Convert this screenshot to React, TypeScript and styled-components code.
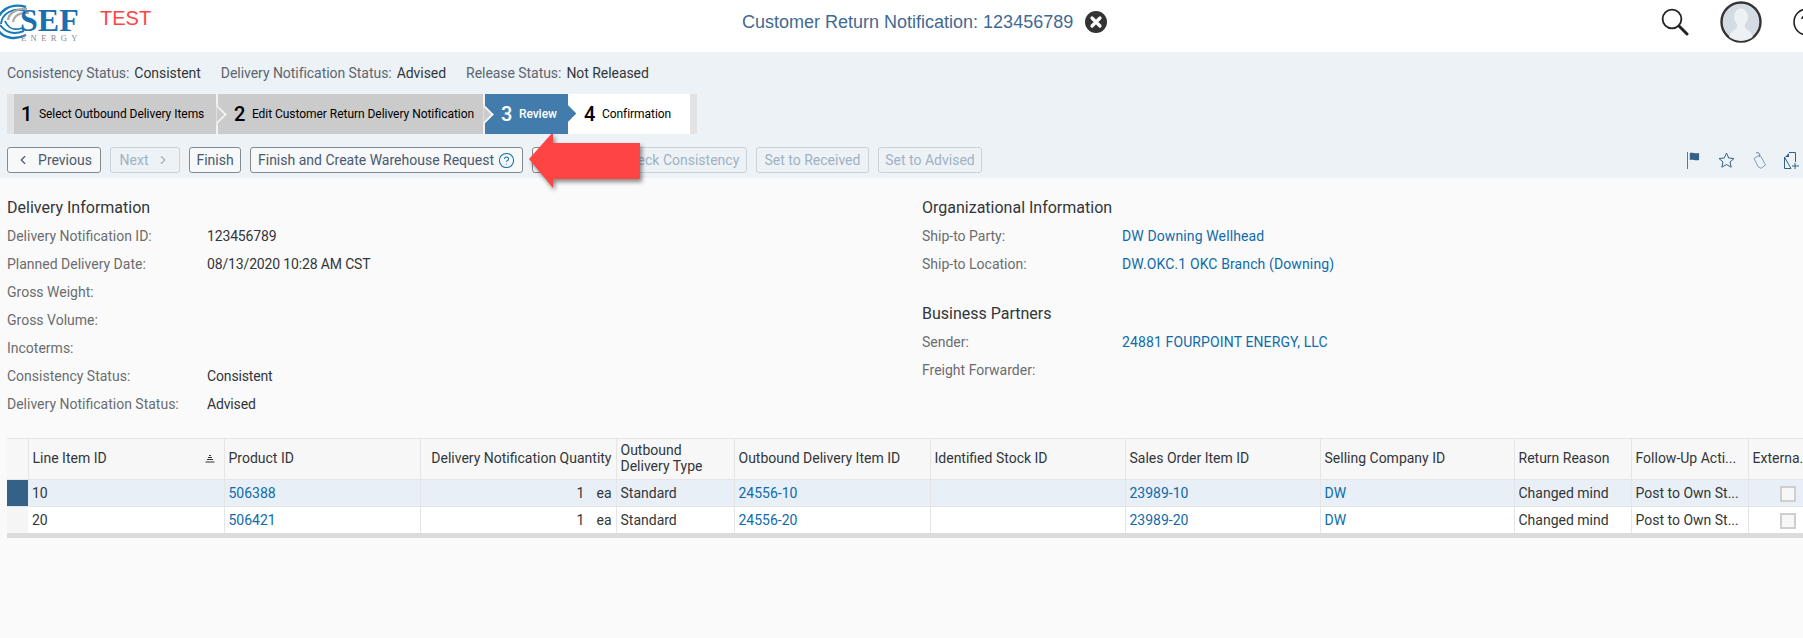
import React from "react";
import styled, { createGlobalStyle } from "styled-components";
import { ChevronLeft, ChevronRight, CircleHelp } from "lucide-react";

const Global = createGlobalStyle`
  html, body { margin: 0; padding: 0; height: 100%; background: #fafafa; overflow: hidden; }
  body { font-family: Roboto, "Liberation Sans", sans-serif; font-size: 14px; color: #32363a; }
  * { box-sizing: border-box; }
`;

const Page = styled.div`
  position: relative;
  width: 1803px;
  height: 638px;
  overflow: hidden;
  background: #fafafa;
`;

const Header = styled.header`
  display: flex;
  align-items: center;
  height: 52px;
  padding-bottom: 8px;
  background: #fff;
`;
const Brand = styled.div`
  flex: 0 0 742px;
  display: flex;
  align-items: flex-start;
  height: 100%;
`;
const Test = styled.span`
  margin: 6px 0 0 8px;
  font-family: "Liberation Sans", Arial, sans-serif;
  font-size: 20px;
  line-height: 24px;
  color: #ff4444;
`;
const Title = styled.h1`
  display: flex;
  align-items: center;
  gap: 12px;
  margin: 0;
  font-family: "Liberation Sans", Arial, sans-serif;
  font-weight: 400;
  font-size: 18px;
  color: #3f6a94;
`;
const HeaderActions = styled.div`
  display: flex;
  align-items: center;
  gap: 31px;
  margin-left: auto;
  margin-right: -18px;
`;

const SubHeader = styled.section`
  height: 126px;
  padding: 0 0 0 7px;
  background: #edf2f7;
  display: flex;
  flex-direction: column;
`;
const StatusBar = styled.div`
  display: flex;
  gap: 20px;
  height: 42px;
  align-items: center;
`;
const StatusItem = styled.div`
  display: flex;
  gap: 5px;
`;
const StatusLabel = styled.span`
  color: #5c6670;
  letter-spacing: -0.05px;
`;
const StatusValue = styled.span`
  color: #32363a;
  letter-spacing: -0.05px;
`;

const Wizard = styled.ol`
  display: flex;
  align-self: flex-start;
  height: 40px;
  margin: 0;
  padding: 0 7px;
  list-style: none;
  background: #e3e3e3;
`;
const Step = styled.li<{ $width: number; $pad: number; $z: number; $tone: "done" | "active" | "todo" }>`
  position: relative;
  z-index: ${(p) => p.$z};
  display: flex;
  align-items: center;
  gap: 6.5px;
  width: ${(p) => p.$width}px;
  padding-left: ${(p) => p.$pad}px;
  background: ${(p) => (p.$tone === "done" ? "#cbcbcb" : p.$tone === "active" ? "#427cac" : "#fff")};
  color: ${(p) => (p.$tone === "active" ? "#fff" : "#000")};
  border-right: ${(p) => (p.$tone === "done" ? "2px solid #f2f2f2" : "none")};
  ${(p) =>
    p.$tone === "todo"
      ? ""
      : `&::after {
    content: "";
    position: absolute;
    right: ${p.$tone === "done" ? -8 : -6}px;
    top: 13px;
    width: 13px;
    height: 13px;
    background: inherit;
    transform: rotate(45deg);
    clip-path: polygon(0 0, 100% 0, 100% 100%);
    ${p.$tone === "done" ? "border-top: 2px solid #f2f2f2; border-right: 2px solid #f2f2f2;" : ""}
  }`}
`;
const StepNumber = styled.span`
  font-size: 20px;
  font-weight: 500;
`;
const StepLabel = styled.span<{ $strong?: boolean }>`
  font-size: 12px;
  letter-spacing: -0.04px;
  font-weight: ${(p) => (p.$strong ? 500 : 400)};
  white-space: nowrap;
`;

const Toolbar = styled.div`
  display: flex;
  align-items: center;
  gap: 9px;
  margin-top: 13px;
  height: 26px;
`;
const ToolButton = styled.button<{ $width?: number; $gap?: number }>`
  display: inline-flex;
  align-items: center;
  justify-content: center;
  gap: ${(p) => p.$gap ?? 4}px;
  height: 26px;
  ${(p) => (p.$width ? `width: ${p.$width}px;` : "")}
  padding: 0 4px;
  font: inherit;
  color: #4a5a6c;
  background: #f6f8fa;
  border: 1px solid #86898c;
  border-radius: 3px;
  white-space: nowrap;
  &:disabled {
    color: #9fb1c2;
    background: transparent;
    border-color: #c9d3dc;
  }
`;
const ToolIcons = styled.div`
  display: flex;
  align-items: center;
  gap: 18px;
  margin-left: auto;
  padding-right: 4px;
`;

const Form = styled.section`
  display: flex;
  padding: 14px 0 0 7px;
  height: 260px;
`;
const FormColumn = styled.div<{ $width: number }>`
  flex: 0 0 ${(p) => p.$width}px;
  display: flex;
  flex-direction: column;
`;
const FormGroup = styled.div`
  & + & {
    margin-top: 20px;
  }
`;
const FormTitle = styled.h2`
  margin: 0;
  height: 30px;
  line-height: 32px;
  font-size: 16px;
  font-weight: 400;
  color: #32363a;
`;
const FormRow = styled.div`
  display: grid;
  grid-template-columns: 200px 1fr;
  height: 28px;
  align-items: center;
`;
const FieldLabel = styled.span`
  color: #6a6d70;
`;
const FieldValue = styled.span`
  color: #32363a;
  letter-spacing: -0.15px;
`;
const Link = styled.a`
  color: #0f6bab;
  text-decoration: none;
`;
const FieldLink = styled(Link)`
  letter-spacing: 0.12px;
`;

const TableWrap = styled.div`
  margin: 0 0 0 7px;
  overflow: hidden;
`;
const Table = styled.table`
  width: 1821px;
  table-layout: fixed;
  border-collapse: collapse;
  border-top: 1px solid #e5e5e5;
`;
const HeadCell = styled.th<{ $right?: boolean }>`
  position: relative;
  height: 41px;
  padding: 0 4px 2px;
  font-weight: 400;
  line-height: 16px;
  text-align: ${(p) => (p.$right ? "right" : "left")};
  color: #32363a;
  background: #f7f7f7;
  border-right: 1px solid #e5e5e5;
  border-bottom: 1px solid #e5e5e5;
  white-space: pre-line;
`;
const SortMark = styled.svg`
  position: absolute;
  right: 9px;
  top: 15px;
`;
const Row = styled.tr<{ $selected?: boolean }>`
  background: ${(p) => (p.$selected ? "#e8eff6" : "#fff")};
`;
const Cell = styled.td<{ $right?: boolean; $center?: boolean }>`
  height: 27px;
  padding: 0 4px;
  white-space: nowrap;
  text-align: ${(p) => (p.$right ? "right" : p.$center ? "center" : "left")};
  border-right: 1px solid #e5e5e5;
  border-bottom: 1px solid #e5e5e5;
`;
const SelectCell = styled.td<{ $selected?: boolean }>`
  padding: 0;
  background: ${(p) => (p.$selected ? "#346187" : "#f5f5f5")};
  border-bottom: 1px solid #e5e5e5;
`;
const Unit = styled.span`
  margin-left: 12px;
`;
const Check = styled.span`
  display: inline-block;
  vertical-align: middle;
  width: 16px;
  height: 16px;
  background: #f7f7f7;
  border: 2px solid #cfcfcf;
`;
const TableFoot = styled.div`
  width: 100%;
  height: 5px;
  margin-top: -1px;
  background: #dcdcdc;
`;
const CallOut = styled.svg`
  position: absolute;
  left: 525px;
  top: 128px;
  filter: drop-shadow(2px 3px 2px rgba(0, 0, 0, 0.45));
`;

const Logo = () => (
  <svg width="92" height="44" viewBox="0 0 92 44" aria-label="SEF Energy">
    <g fill="none" stroke="#1b7ab8">
      <path d="M26 7 C10 2 -3 12 -3 24" strokeWidth="2.4" />
      <path d="M25 11 C12 7 2 14 1 24" strokeWidth="2" />
      <path d="M-2 30 C4 39 16 40 26 35" strokeWidth="2.4" />
      <path d="M0 25 C6 33 14 35 24 31" strokeWidth="2" />
      <path d="M5 21 C8 28 14 31 22 28" strokeWidth="1.8" />
    </g>
    <g fill="none" stroke="#a9a9a9">
      <path d="M27 9 C17 8 9 13 8 20" strokeWidth="2.4" />
      <path d="M29 13 C21 12 14 15 13 22" strokeWidth="2.2" />
    </g>
    <text x="20" y="31" fontFamily="'Liberation Serif', serif" fontWeight="700" fontSize="32" fill="#1a6fb0">
      SEF
    </text>
    <text x="21" y="41" fontFamily="'Liberation Serif', serif" fontSize="8.5" letterSpacing="4.4" fill="#8a8a8a">
      ENERGY
    </text>
  </svg>
);

const CloseIcon = () => (
  <svg width="22" height="22" viewBox="0 0 22 22" aria-hidden="true">
    <circle cx="11" cy="11" r="11" fill="#333" />
    <path d="M7 7 L15 15 M15 7 L7 15" stroke="#fff" strokeWidth="3.2" strokeLinecap="round" />
  </svg>
);
const SearchIcon = () => (
  <svg width="28" height="28" viewBox="0 0 28 28" aria-hidden="true">
    <circle cx="11" cy="11" r="9.4" fill="none" stroke="#222" strokeWidth="1.8" />
    <path d="M18 18 L26 26" stroke="#222" strokeWidth="3" strokeLinecap="round" />
  </svg>
);
const Avatar = () => (
  <svg width="42" height="42" viewBox="0 0 42 42" aria-hidden="true">
    <defs>
      <clipPath id="avatarClip">
        <circle cx="21" cy="21" r="19" />
      </clipPath>
    </defs>
    <circle cx="21" cy="21" r="19.5" fill="#d4dbe2" stroke="#333" strokeWidth="2.4" />
    <g clipPath="url(#avatarClip)" fill="#eef1f4">
      <ellipse cx="21" cy="16" rx="7" ry="8.5" />
      <path d="M17 22 H25 V27 C29 30 33 31 34 42 H8 C9 31 13 30 17 27 Z" />
    </g>
  </svg>
);
const HelpIcon = () => (
  <svg width="28" height="28" viewBox="0 0 28 28" aria-hidden="true">
    <circle cx="14" cy="14" r="13" fill="none" stroke="#222" strokeWidth="1.6" />
    <path d="M9 11 C9 7 19 6 19 11 C19 15 14 14 14 19" fill="none" stroke="#222" strokeWidth="1.6" />
  </svg>
);
const FlagIcon = () => (
  <svg width="13" height="17" viewBox="0 0 14 17" preserveAspectRatio="none" aria-hidden="true">
    <path d="M0.5 0 V17" stroke="#6b5b95" strokeWidth="1" />
    <path d="M3 1 C6 0 8 2 13 1 V8 C9 9 6 7 3 8 Z" fill="#346187" />
  </svg>
);
const StarIcon = () => (
  <svg width="17" height="16" viewBox="0 0 17 16" aria-hidden="true">
    <path d="M8.5 1 L10.7 6 L16 6.5 L12 10 L13.2 15.2 L8.5 12.5 L3.8 15.2 L5 10 L1 6.5 L6.3 6 Z" fill="none" stroke="#346187" strokeWidth="1" />
  </svg>
);
const TagIcon = () => (
  <svg width="13" height="17" viewBox="0 0 13 17" aria-hidden="true">
    <path d="M1 6.5 L5.5 3.5 L8 4.5 L12.5 13 L8 16.3 L5.5 15.2 Z" fill="none" stroke="#7f9cbd" strokeWidth="1" />
    <path d="M3 1 C6 0 8 2 6 5" fill="none" stroke="#5e7fa6" strokeWidth="1" />
  </svg>
);
const NewDocIcon = () => (
  <svg width="15" height="17" viewBox="0 0 15 17" aria-hidden="true">
    <path d="M5 0.5 H11.5 V10 M7 16.5 H0.5 V5 Z" fill="none" stroke="#346187" strokeWidth="1" />
    <path d="M1 5 L5 1 V5 Z" fill="#346187" />
    <path d="M11 11 V17 M8 14 H15" stroke="#346187" strokeWidth="1" />
  </svg>
);

const rows = [
  { id: "10", product: "506388", item: "24556-10", order: "23989-10", selected: true },
  { id: "20", product: "506421", item: "24556-20", order: "23989-20", selected: false },
];
const colWidths = [21, 196, 196, 196, 118, 196, 195, 195, 194, 117, 117, 80];

export default function App() {
  return (
    <Page>
      <Global />
      <Header>
        <Brand>
          <Logo />
          <Test>TEST</Test>
        </Brand>
        <Title>
          Customer Return Notification: 123456789
          <CloseIcon />
        </Title>
        <HeaderActions>
          <SearchIcon />
          <Avatar />
          <HelpIcon />
        </HeaderActions>
      </Header>

      <SubHeader>
        <StatusBar>
          <StatusItem>
            <StatusLabel>Consistency Status:</StatusLabel>
            <StatusValue>Consistent</StatusValue>
          </StatusItem>
          <StatusItem>
            <StatusLabel>Delivery Notification Status:</StatusLabel>
            <StatusValue>Advised</StatusValue>
          </StatusItem>
          <StatusItem>
            <StatusLabel>Release Status:</StatusLabel>
            <StatusValue>Not Released</StatusValue>
          </StatusItem>
        </StatusBar>
        <Wizard>
          <Step $tone="done" $width={204} $pad={7} $z={4}>
            <StepNumber>1</StepNumber>
            <StepLabel>Select Outbound Delivery Items</StepLabel>
          </Step>
          <Step $tone="done" $width={267} $pad={16} $z={3}>
            <StepNumber>2</StepNumber>
            <StepLabel>Edit Customer Return Delivery Notification</StepLabel>
          </Step>
          <Step $tone="active" $width={83} $pad={16} $z={2}>
            <StepNumber>3</StepNumber>
            <StepLabel $strong>Review</StepLabel>
          </Step>
          <Step $tone="todo" $width={122} $pad={16} $z={1}>
            <StepNumber>4</StepNumber>
            <StepLabel>Confirmation</StepLabel>
          </Step>
        </Wizard>
        <Toolbar>
          <ToolButton $width={94} $gap={8}>
            <ChevronLeft size={14} />
            Previous
          </ToolButton>
          <ToolButton $width={70} $gap={8} disabled>
            Next
            <ChevronRight size={14} />
          </ToolButton>
          <ToolButton $width={52}>Finish</ToolButton>
          <ToolButton $width={273}>
            Finish and Create Warehouse Request
            <CircleHelp size={17} color="#0f6bab" strokeWidth={1.5} />
          </ToolButton>
          <ToolButton $width={72} aria-hidden="true" />
          <ToolButton $width={134} disabled>
            Check Consistency
          </ToolButton>
          <ToolButton $width={113} disabled>
            Set to Received
          </ToolButton>
          <ToolButton $width={104} disabled>
            Set to Advised
          </ToolButton>
          <ToolIcons>
            <FlagIcon />
            <StarIcon />
            <TagIcon />
            <NewDocIcon />
          </ToolIcons>
        </Toolbar>
      </SubHeader>

      <Form>
        <FormColumn $width={915}>
          <FormGroup>
            <FormTitle>Delivery Information</FormTitle>
            <FormRow>
              <FieldLabel>Delivery Notification ID:</FieldLabel>
              <FieldValue>123456789</FieldValue>
            </FormRow>
            <FormRow>
              <FieldLabel>Planned Delivery Date:</FieldLabel>
              <FieldValue>08/13/2020 10:28 AM CST</FieldValue>
            </FormRow>
            <FormRow>
              <FieldLabel>Gross Weight:</FieldLabel>
            </FormRow>
            <FormRow>
              <FieldLabel>Gross Volume:</FieldLabel>
            </FormRow>
            <FormRow>
              <FieldLabel>Incoterms:</FieldLabel>
            </FormRow>
            <FormRow>
              <FieldLabel>Consistency Status:</FieldLabel>
              <FieldValue>Consistent</FieldValue>
            </FormRow>
            <FormRow>
              <FieldLabel>Delivery Notification Status:</FieldLabel>
              <FieldValue>Advised</FieldValue>
            </FormRow>
          </FormGroup>
        </FormColumn>
        <FormColumn $width={600}>
          <FormGroup>
            <FormTitle>Organizational Information</FormTitle>
            <FormRow>
              <FieldLabel>Ship-to Party:</FieldLabel>
              <FieldLink>DW Downing Wellhead</FieldLink>
            </FormRow>
            <FormRow>
              <FieldLabel>Ship-to Location:</FieldLabel>
              <FieldLink>DW.OKC.1 OKC Branch (Downing)</FieldLink>
            </FormRow>
          </FormGroup>
          <FormGroup>
            <FormTitle>Business Partners</FormTitle>
            <FormRow>
              <FieldLabel>Sender:</FieldLabel>
              <FieldLink>24881 FOURPOINT ENERGY, LLC</FieldLink>
            </FormRow>
            <FormRow>
              <FieldLabel>Freight Forwarder:</FieldLabel>
            </FormRow>
          </FormGroup>
        </FormColumn>
      </Form>

      <TableWrap>
        <Table>
          <colgroup>
            {colWidths.map((w, i) => (
              <col key={i} width={w} />
            ))}
          </colgroup>
          <thead>
            <tr>
              <HeadCell />
              <HeadCell>
                Line Item ID
                <SortMark width="10" height="9" viewBox="0 0 10 9" aria-hidden="true">
                  <path d="M4 1.5 H6 M3 3.5 H7 M2 5.5 H8 M0.5 8 H9.5" stroke="#333" strokeWidth="1" />
                </SortMark>
              </HeadCell>
              <HeadCell>Product ID</HeadCell>
              <HeadCell $right>Delivery Notification Quantity</HeadCell>
              <HeadCell>{"Outbound\nDelivery Type"}</HeadCell>
              <HeadCell>Outbound Delivery Item ID</HeadCell>
              <HeadCell>Identified Stock ID</HeadCell>
              <HeadCell>Sales Order Item ID</HeadCell>
              <HeadCell>Selling Company ID</HeadCell>
              <HeadCell>Return Reason</HeadCell>
              <HeadCell>Follow-Up Acti...</HeadCell>
              <HeadCell>Externa...</HeadCell>
            </tr>
          </thead>
          <tbody>
            {rows.map((r) => (
              <Row key={r.id} $selected={r.selected}>
                <SelectCell $selected={r.selected} />
                <Cell>{r.id}</Cell>
                <Cell>
                  <Link>{r.product}</Link>
                </Cell>
                <Cell $right>
                  1<Unit>ea</Unit>
                </Cell>
                <Cell>Standard</Cell>
                <Cell>
                  <Link>{r.item}</Link>
                </Cell>
                <Cell />
                <Cell>
                  <Link>{r.order}</Link>
                </Cell>
                <Cell>
                  <Link>DW</Link>
                </Cell>
                <Cell>Changed mind</Cell>
                <Cell>Post to Own St...</Cell>
                <Cell $center>
                  <Check />
                </Cell>
              </Row>
            ))}
          </tbody>
        </Table>
        <TableFoot />
      </TableWrap>

      <CallOut width="120" height="66" viewBox="0 0 120 66" aria-hidden="true">
        <path d="M4 31 L28 4 V15 H115 V51 H28 V60 Z" fill="#ff4444" />
      </CallOut>
    </Page>
  );
}
